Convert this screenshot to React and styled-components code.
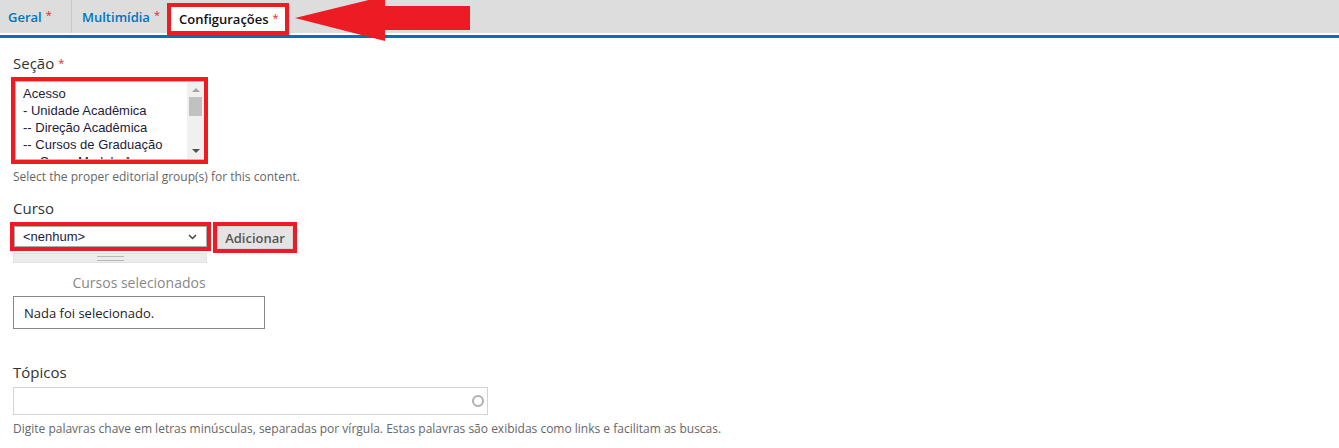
import React from 'react'
import styled, {createGlobalStyle} from 'styled-components'

const GlobalStyle = createGlobalStyle`
  body {
    margin: 0;
    background: #fff;
    font-family: "Open Sans", "Noto Sans", sans-serif;
    color: #333;
  }
`

const Header = styled.div`
  position: relative;
  padding-bottom: 2px;
  border-bottom: 3px solid #0071b9;
`

const TabList = styled.ul`
  display: flex;
  height: 33px;
  margin: 0;
  padding: 0;
  list-style: none;
  background: #dddddd;
`

const Tab = styled.li`
  display: flex;
  align-items: center;
  box-sizing: border-box;
  width: ${p => p.$width}px;
  padding-left: ${p => p.$pad}px;
  font-size: 13px;
  font-weight: 600;
  color: #0074bd;
  border-right: ${p => (p.$divider ? '1px solid #c8c8c8' : 'none')};
  white-space: nowrap;
`

const ActiveTab = styled.li`
  display: flex;
  align-items: center;
  box-sizing: border-box;
  height: 32px;
  margin: 3px 0 0 -2px;
  padding-left: 8px;
  width: 122px;
  background: #fff;
  border: 4px solid #ed1c24;
  font-size: 13px;
  font-weight: 600;
  color: #111;
  white-space: nowrap;
  position: relative;
  z-index: 1;
`

const Star = styled.span`
  color: #e3262d;
  font-weight: 400;
  margin-left: 4px;
  font-size: 11px;
  position: relative;
  top: -2px;
`

const Arrow = styled.svg`
  position: absolute;
  left: 290px;
  top: 0;
  z-index: 2;
`

const Form = styled.div`
  padding: 15px 13px 0;
  display: flex;
  flex-direction: column;
  align-items: flex-start;
`

const Label = styled.div`
  font-size: 15px;
  color: #333;
  line-height: 20px;
  margin-top: ${p => p.$top || 0}px;
`

const RedFrame = styled.div`
  border: 4px solid #ed1c24;
  margin-left: ${p => p.$shift || -2}px;
  margin-top: ${p => p.$top || 0}px;
  display: flex;
`

const ListBox = styled.div`
  display: flex;
  width: 188px;
  height: 77px;
  border: 1px solid #bbb;
  border-right: none;
  overflow: hidden;
`

const Options = styled.div`
  flex: 1;
  padding: 3px 0 0 7px;
  font-family: "Liberation Sans", Arial, sans-serif;
  font-size: 13px;
  line-height: 17px;
  color: #1c1c3a;
  white-space: nowrap;
  overflow: hidden;
`

const Scrollbar = styled.div`
  width: 17px;
  background: #f0f0f0;
  display: flex;
  flex-direction: column;
  align-items: center;
`

const ScrollArrow = styled.div`
  width: 0;
  height: 0;
  border-left: 4px solid transparent;
  border-right: 4px solid transparent;
  ${p =>
    p.$up
      ? 'border-bottom: 4px solid #a3a3a3; margin-top: 6px;'
      : 'border-top: 4px solid #505050; margin-top: auto; margin-bottom: 6px;'}
`

const Thumb = styled.div`
  width: 13px;
  height: 19px;
  background: #c1c1c1;
  margin-top: 5px;
`

const Help = styled.div`
  font-size: 12px;
  color: #666;
  line-height: 16px;
  margin-top: ${p => p.$top || 0}px;
`

const Row = styled.div`
  display: flex;
  align-items: flex-start;
  margin-top: 4px;
`

const SelectBox = styled.div`
  display: flex;
  align-items: center;
  width: 174px;
  height: 19px;
  border: 1px solid #aaa;
  padding: 0 9px 0 8px;
  font-family: "Liberation Sans", Arial, sans-serif;
  font-size: 13px;
  color: #1c1c3a;
`

const Chevron = styled.svg`
  margin-left: auto;
`

const ButtonFrame = styled.div`
  border: 4px solid #ed1c24;
  margin-left: 2px;
  display: flex;
`

const Button = styled.div`
  background: #e4e4e4;
  border: 1px solid #d6d6d6;
  width: 74px;
  height: 21px;
  display: flex;
  align-items: center;
  justify-content: center;
  font-size: 13px;
  font-weight: 600;
  color: #555;
`

const Grip = styled.div`
  width: 194px;
  height: 10px;
  background: #ececec;
  border: 1px solid #e2e2e2;
  box-sizing: border-box;
  display: flex;
  align-items: center;
  justify-content: center;
`

const GripLines = styled.div`
  width: 27px;
  height: 3px;
  border-top: 1px solid #b8b8b8;
  border-bottom: 1px solid #b8b8b8;
`

const Caption = styled.div`
  width: 252px;
  text-align: center;
  font-size: 14px;
  color: #888;
  margin-top: 10px;
  line-height: 20px;
`

const EmptyBox = styled.div`
  width: 240px;
  height: 31px;
  border: 1px solid #888;
  margin-top: 3px;
  display: flex;
  align-items: center;
  padding-left: 10px;
  font-size: 13px;
  color: #222;
`

const TextInput = styled.div`
  width: 470px;
  height: 26px;
  border: 1px solid #d4d4d4;
  margin-top: 5px;
  display: flex;
  align-items: center;
  justify-content: flex-end;
  padding-right: 3px;
`

const Throbber = styled.div`
  width: 8px;
  height: 8px;
  border: 2px solid #b0b0b0;
  border-radius: 50%;
`

const sections = ['Acesso', '- Unidade Acadêmica', '-- Direção Acadêmica', '-- Cursos de Graduação', '--- Curso Modelo A']

export default function App() {
  return (
    <>
      <GlobalStyle />
      <Header>
        <TabList>
          <Tab $width={72} $pad={8} $divider>
            Geral<Star>*</Star>
          </Tab>
          <Tab $width={97} $pad={10}>
            Multimídia<Star>*</Star>
          </Tab>
          <ActiveTab>
            Configurações<Star>*</Star>
          </ActiveTab>
        </TabList>
        <Arrow width="185" height="41" viewBox="0 0 185 41">
          <polygon points="5,18 95,-4 95,6 180,6 180,30 95,30 95,41" fill="#ed1c24" />
        </Arrow>
      </Header>
      <Form>
        <Label>
          Seção<Star>*</Star>
        </Label>
        <RedFrame $top={2}>
          <ListBox>
            <Options>
              {sections.map(s => (
                <div key={s}>{s}</div>
              ))}
            </Options>
            <Scrollbar>
              <ScrollArrow $up />
              <Thumb />
              <ScrollArrow />
            </Scrollbar>
          </ListBox>
        </RedFrame>
        <Help $top={5}>Select the proper editorial group(s) for this content.</Help>
        <Label $top={13}>Curso</Label>
        <Row>
          <RedFrame $shift={-3}>
            <SelectBox>
              &lt;nenhum&gt;
              <Chevron width="9" height="6" viewBox="0 0 9 6">
                <path d="M1 1l3.5 3.5L8 1" fill="none" stroke="#444" strokeWidth="1.5" />
              </Chevron>
            </SelectBox>
          </RedFrame>
          <ButtonFrame>
            <Button>Adicionar</Button>
          </ButtonFrame>
        </Row>
        <Grip>
          <GripLines />
        </Grip>
        <Caption>Cursos selecionados</Caption>
        <EmptyBox>Nada foi selecionado.</EmptyBox>
        <Label $top={33}>Tópicos</Label>
        <TextInput>
          <Throbber />
        </TextInput>
        <Help $top={6}>
          Digite palavras chave em letras minúsculas, separadas por vírgula. Estas palavras são exibidas como links e facilitam as buscas.
        </Help>
      </Form>
    </>
  )
}
